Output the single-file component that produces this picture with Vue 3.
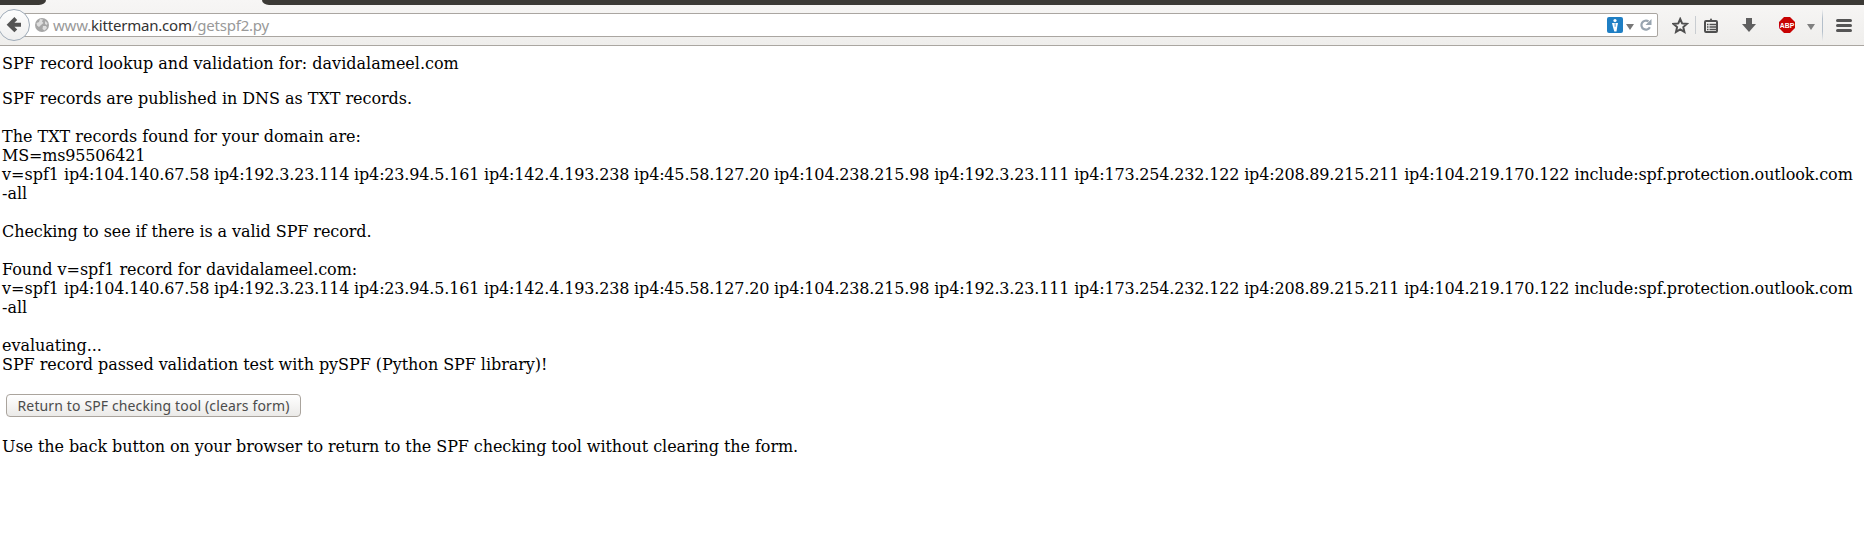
<script setup>
const mechanisms = 'ip4:104.140.67.58 ip4:192.3.23.114 ip4:23.94.5.161 ip4:142.4.193.238 ip4:45.58.127.20 ip4:104.238.215.98 ip4:192.3.23.111 ip4:173.254.232.122 ip4:208.89.215.211 ip4:104.219.170.122'
const include = 'include:spf.protection.outlook.com'
</script>

<template>
  <div class="window">
    <header class="chrome">
      <div class="tabstrip"><div class="dark left"></div><div class="dark right"></div></div>
      <div class="toolbar">
        <svg class="back" width="31" height="34" viewBox="0 0 31 34">
          <defs>
            <linearGradient id="disc" x1="0" y1="0" x2="0" y2="1">
              <stop offset="0" stop-color="#fefefe" /><stop offset="1" stop-color="#efefef" />
            </linearGradient>
          </defs>
          <circle cx="14" cy="17" r="15.500" fill="url(#disc)" stroke="#9fabb8" />
          <path d="M15.800 10.500L9.500 16.700l6.300 6.200M10 16.700h11" fill="none" stroke="#555" stroke-width="4" />
        </svg>
        <div class="urlbar">
          <svg class="globe" width="14" height="14" viewBox="0 0 14 14">
            <circle cx="7" cy="7" r="7" fill="#a6a6a6" />
            <path d="M5 1l3 .5-1 2L8.500 5 6 7 4 9 2 7.500 1.500 5 4 4zM10 3l2.500 2L12 7l-2-1zM8 8l3 0 1 2-2.500 2.500L7.500 11z" fill="#dedede" />
          </svg>
          <div class="url"><span class="sub">www.</span><span class="host">kitterman.com</span><span class="path">/getspf2.py</span></div>
          <svg class="badge" width="16" height="16" viewBox="0 0 16 16">
            <rect width="16" height="16" rx="2" fill="#1f7fc4" />
            <circle cx="8" cy="3.500" r="1.600" fill="#fff" />
            <path d="M5 6h6l-.8 4-.7 4.500H7.300L6 10z" fill="#fff" />
            <path d="M7.700 6.200h.8v3.500h-.8z" fill="#1f7fc4" />
          </svg>
          <svg class="drop1" width="8" height="6" viewBox="0 0 8 6"><path d="M0 0h8L4 6z" fill="#777" /></svg>
          <svg class="reload" width="12" height="12" viewBox="0 0 12 12">
            <path d="M9.900 8.300A4.500 4.500 0 1 1 8.500 2.400" fill="none" stroke="#98a4af" stroke-width="2.200" />
            <path d="M11.500 0v6H5.500z" fill="#98a4af" />
          </svg>
        </div>
        <svg class="star" width="17" height="17" viewBox="0 0 17 17">
          <path d="M8.200 2l1.900 4.400 4.800.5-3.600 3.200 1.100 4.800-4.200-2.500L4 14.900l1.100-4.800L1.500 6.900l4.800-.5z" fill="none" stroke="#4f4f4f" stroke-width="2" />
        </svg>
        <i class="sep"></i>
        <svg class="clip" width="15" height="15" viewBox="0 0 15 15">
          <path d="M4 2.500h1.500L7 0l1.500 2.500H10V4H4z" fill="#4f4f4f" />
          <rect x="1" y="3" width="12" height="11" rx="1" fill="none" stroke="#4f4f4f" stroke-width="2" />
          <path d="M3 6.500h1.500M5.500 6.500H12M3 9h1.500M5.500 9H12M3 11.500h1.500M5.500 11.500H12" stroke="#4f4f4f" stroke-width="1.500" />
        </svg>
        <svg class="down" width="14" height="14" viewBox="0 0 14 14"><path d="M4 0h6v6h4L7 14 0 6h4z" fill="#5f5f5f" /></svg>
        <svg class="abp" width="16" height="16" viewBox="0 0 16 16">
          <path d="M5 0h6l5 5v6l-5 5H5l-5-5V5z" fill="#c70202" />
          <text x="0.800" y="11" textLength="14.400" lengthAdjust="spacingAndGlyphs">ABP</text>
        </svg>
        <svg class="drop2" width="8" height="6" viewBox="0 0 8 6"><path d="M0 0h8L4 6z" fill="#808080" /></svg>
        <i class="sep tall"></i>
        <svg class="menu" width="16" height="13" viewBox="0 0 16 13"><path d="M1.500 1.500h13M1.500 6.500h13M1.500 11.500h13" stroke="#555" stroke-width="3" stroke-linecap="round" /></svg>
      </div>
    </header>
    <main>
      <p>SPF record lookup and validation for: davidalameel.com</p>
      <p>
        <span class="snug">SPF records are published in DNS as TXT records.</span><br><br>
        The TXT records found for your domain are:<br>
        <span class="digits">MS=ms95506421</span><br>
        v=spf1 <span class="digits">{{ mechanisms }}</span> <span class="include">{{ include }}</span> -all<br><br>
        <span class="tight">Checking to see if there is a valid SPF record.</span><br><br>
        <span class="snug">Found v=spf1 record for davidalameel.com:</span><br>
        v=spf1 <span class="digits">{{ mechanisms }}</span> <span class="include">{{ include }}</span> -all<br><br>
        <span class="snug">evaluating...</span><br>
        <span class="close">SPF record passed validation test with pySPF (Python SPF library)!</span>
      </p>
      <button type="button"><span>Return to SPF checking tool (clears form)</span></button>
      <p class="last tight">Use the back button on your browser to return to the SPF checking tool without clearing the form.</p>
    </main>
  </div>
</template>

<style>
body { margin: 0; background: #fff; }
</style>

<style scoped>
.window { height: 543px; overflow: hidden; background: #fff; }
.chrome { height: 46px; box-sizing: border-box; border-bottom: 1px solid #aaa6a1; background: linear-gradient(#f7f6f5, #efeeec); }
.tabstrip { height: 5px; display: flex; justify-content: space-between; }
.dark { height: 5px; background: #3c3a36; }
.left { width: 46px; border-bottom-right-radius: 7px 5px; }
.right { width: 1602px; border-bottom-left-radius: 7px 5px; }
.toolbar { height: 40px; display: flex; align-items: center; }
.toolbar svg, .toolbar i { flex: none; }
.back { position: relative; z-index: 1; }
.urlbar { height: 24px; box-sizing: border-box; width: 1643px; margin-left: -16px; border: 1px solid #aaa6a1; border-radius: 2px; background: #fff; display: flex; align-items: center; padding-left: 19px; }
.url { margin-left: 4px; flex: 1; font: 15px/20px "Noto Sans", sans-serif; letter-spacing: -0.2px; color: #999; white-space: nowrap; }
.host { color: #333; }
.drop1 { margin: 3px 0 0 3px; }
.reload { margin: 0 5px 0 6px; }
.star { margin-left: 14px; }
.sep { width: 1px; height: 18px; background: #c9cdd1; margin-left: 6px; }
.clip { margin-left: 8px; }
.down { margin-left: 23px; }
.abp { margin-left: 23px; overflow: visible; }
.abp text { font: bold 8px "Liberation Sans", sans-serif; fill: #fff; }
.drop2 { margin: 3px 0 0 12px; }
.sep.tall { height: 32px; margin-left: 7px; background: linear-gradient(transparent, #b4bfca 30%, #b4bfca 70%, transparent); }
.menu { margin-left: 13px; }
main { padding: 8px 8px 0 2px; font: 16px/19px "DejaVu Serif", serif; color: #000; }
p { margin: 0 0 16px; }
.snug { letter-spacing: -0.037px; }
.close { letter-spacing: -0.054px; }
.tight { letter-spacing: -0.077px; }
.digits { letter-spacing: -0.17px; }
.include { letter-spacing: -0.11px; }
button { display: block; box-sizing: border-box; width: 295px; height: 23px; margin: 20px 0 0 4px; padding: 0; border: 1px solid #aaa49d; border-radius: 4px; background: linear-gradient(#fff, #ebeae8); color: #4c4c4c; font: 14px/20px "Noto Sans", sans-serif; letter-spacing: 0.13px; white-space: nowrap; }
.last { margin-top: 20px; }
</style>
